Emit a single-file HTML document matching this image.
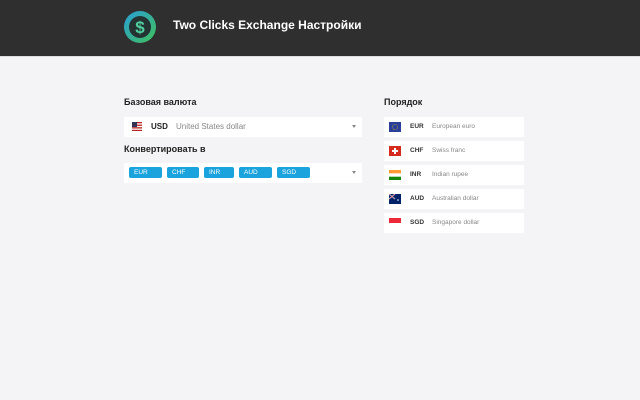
<!DOCTYPE html>
<html><head><meta charset="utf-8"><style>
*{margin:0;padding:0;box-sizing:border-box}
body{width:640px;height:400px;background:#f4f4f6;font-family:"Liberation Sans",sans-serif;position:relative;overflow:hidden}
.hdr{position:absolute;left:0;top:0;width:640px;height:57px;background:#2f2f2f;border-bottom:1px solid #ddd}
.title{position:absolute;left:173px;top:18px;color:#fff;font-weight:bold;font-size:12px}
.lbl{position:absolute;font-size:9px;font-weight:bold;color:#222}
.box{position:absolute;background:#fff;height:20px}
.tag{position:absolute;top:167px;height:11px;background:#1aa3dc;color:#fff;font-size:6.5px;border-radius:2px;padding-left:5px;line-height:11px}
.arrow{position:absolute;width:0;height:0;border-left:2.5px solid transparent;border-right:2.5px solid transparent;border-top:3px solid #888}
.item{position:absolute;left:384px;width:140px;height:20px;background:#fff;font-size:6.5px;color:#888}
.item .c{position:absolute;left:26px;top:6px;font-weight:bold;color:#333}
.item .n{position:absolute;left:48px;top:6px}
.item svg{position:absolute;left:5px;top:5px}
</style></head><body>
<div class="hdr">
<svg style="position:absolute;left:123px;top:10px" width="34" height="34" viewBox="0 0 34 34">
<defs><linearGradient id="g" x1="0" y1="0" x2="1" y2="1"><stop offset="0" stop-color="#2a9fd8"/><stop offset="1" stop-color="#3fbf5a"/></linearGradient></defs>
<circle cx="17" cy="17" r="16" fill="url(#g)"/><circle cx="17" cy="17" r="11" fill="#243232"/>
<text x="17" y="23" text-anchor="middle" font-size="17" font-weight="bold" fill="#4fd0a0" font-family="Liberation Sans">$</text></svg>
<div class="title">Two Clicks Exchange Настройки</div>
</div>
<div class="lbl" style="left:124px;top:97px">Базовая валюта</div>
<div class="box" style="left:124px;top:117px;width:238px">
<svg style="position:absolute;left:8px;top:5px" width="10" height="9"><rect width="10" height="9" fill="#b22"/><rect y="1.3" width="10" height="1.3" fill="#fff"/><rect y="3.9" width="10" height="1.3" fill="#fff"/><rect y="6.5" width="10" height="1.3" fill="#fff"/><rect width="5" height="5" fill="#335"/></svg>
<span style="position:absolute;left:27px;top:5px;font-size:8px;font-weight:bold;color:#222">USD</span>
<span style="position:absolute;left:52px;top:5px;font-size:8px;color:#888">United States dollar</span>
<div class="arrow" style="left:228px;top:8px"></div></div>
<div class="lbl" style="left:124px;top:144px">Конвертировать в</div>
<div class="box" style="left:124px;top:163px;width:238px"><div class="arrow" style="left:228px;top:8px"></div></div>
<div class="tag" style="left:129px;width:33px">EUR</div>
<div class="tag" style="left:167px;width:32px">CHF</div>
<div class="tag" style="left:204px;width:30px">INR</div>
<div class="tag" style="left:239px;width:33px">AUD</div>
<div class="tag" style="left:277px;width:33px">SGD</div>
<div class="lbl" style="left:384px;top:97px">Порядок</div>
<div class="item" style="top:117px"><svg width="12" height="10"><rect width="12" height="10" fill="#2a3f9a"/><circle cx="6" cy="5" r="2.7" fill="none" stroke="#e8c400" stroke-width=".7" stroke-dasharray="0.6 0.8"/></svg><span class="c">EUR</span><span class="n">European euro</span></div>
<div class="item" style="top:141px"><svg width="12" height="10"><rect width="12" height="10" fill="#d52b1e"/><rect x="5" y="2" width="2" height="6" fill="#fff"/><rect x="3" y="4" width="6" height="2" fill="#fff"/></svg><span class="c">CHF</span><span class="n">Swiss franc</span></div>
<div class="item" style="top:165px"><svg width="12" height="10"><rect width="12" height="3.4" fill="#f93"/><rect y="3.4" width="12" height="3.3" fill="#fff"/><rect y="6.7" width="12" height="3.3" fill="#138808"/></svg><span class="c">INR</span><span class="n">Indian rupee</span></div>
<div class="item" style="top:189px"><svg width="12" height="10"><rect width="12" height="10" fill="#012169"/><path d="M0 0L6 5M6 0L0 5" stroke="#fff" stroke-width="1"/><path d="M0 0L6 5M6 0L0 5" stroke="#c8102e" stroke-width=".4"/><circle cx="9" cy="6" r=".8" fill="#fff"/></svg><span class="c">AUD</span><span class="n">Australian dollar</span></div>
<div class="item" style="top:213px"><svg width="12" height="10"><rect width="12" height="5" fill="#ed2939"/><rect y="5" width="12" height="5" fill="#fff"/></svg><span class="c">SGD</span><span class="n">Singapore dollar</span></div>
</body></html>
